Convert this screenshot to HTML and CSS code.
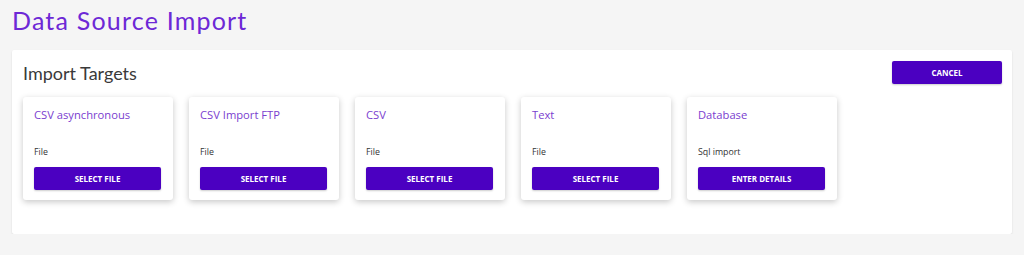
FILE: index.html
```html
<!DOCTYPE html>
<html>
<head>
<meta charset="utf-8">
<link rel="stylesheet" href="styles.css">
</head>
<body>
<h1 class="page-title">Data Source Import</h1>
<section class="panel">
  <div class="panel-head">
    <h2 class="panel-title">Import Targets</h2>
    <button class="btn btn-cancel">CANCEL</button>
  </div>
  <div class="cards">
    <div class="card">
      <div class="card-title">CSV asynchronous</div>
      <div class="card-sub">File</div>
      <button class="btn btn-card">SELECT FILE</button>
    </div>
    <div class="card">
      <div class="card-title">CSV Import FTP</div>
      <div class="card-sub">File</div>
      <button class="btn btn-card">SELECT FILE</button>
    </div>
    <div class="card">
      <div class="card-title">CSV</div>
      <div class="card-sub">File</div>
      <button class="btn btn-card">SELECT FILE</button>
    </div>
    <div class="card">
      <div class="card-title">Text</div>
      <div class="card-sub">File</div>
      <button class="btn btn-card">SELECT FILE</button>
    </div>
    <div class="card">
      <div class="card-title">Database</div>
      <div class="card-sub">Sql import</div>
      <button class="btn btn-card">ENTER DETAILS</button>
    </div>
  </div>
</section>
</body>
</html>
```
FILE: styles.css
```css
html, body { margin: 0; padding: 0; }
body {
  background: #f5f5f5;
  padding: 0 12px;
  font-family: "Open Sans", "Liberation Sans", sans-serif;
  width: 1000px;
}
.page-title {
  margin: 0;
  padding-top: 5px;
  height: 45px;
  box-sizing: border-box;
  font-family: Lato, "Open Sans", sans-serif;
  font-weight: 400;
  font-size: 25px;
  line-height: 30px;
  color: #6d28d6;
  letter-spacing: 1.2px;
}
.panel {
  background: #fff;
  box-shadow: 0 1px 2px rgba(0,0,0,0.12);
  border-radius: 2px;
  padding: 11px 11px 34px 11px;
  margin-top: 5px;
}
.panel-head {
  display: flex;
  justify-content: space-between;
  align-items: flex-start;
  height: 36px;
}
.panel-title {
  margin: 0;
  padding-top: 1px;
  font-family: Lato, "Open Sans", sans-serif;
  font-weight: 400;
  font-size: 18px;
  line-height: 22px;
  color: #3a3a3a;
  letter-spacing: 0;
}
.btn {
  border: none;
  background: #4b00c1;
  color: #fff;
  font-family: "Open Sans", sans-serif;
  font-weight: 700;
  font-size: 8px;
  border-radius: 2px;
  box-shadow: 0 1px 2px rgba(0,0,0,0.2);
  padding: 0;
  cursor: pointer;
}
.btn-cancel {
  width: 110px;
  height: 23px;
  margin-right: -1px;
}
.cards {
  display: flex;
  gap: 16px;
}
.card {
  width: 150px;
  height: 103px;
  box-sizing: border-box;
  padding: 10px 12px 0 11px;
  background: #fff;
  border-radius: 3px;
  box-shadow: 0 2px 6px rgba(0,0,0,0.22);
  display: flex;
  flex-direction: column;
}
.card-title {
  font-size: 11.2px;
  line-height: 15px;
  color: #7a40cf;
}
.card-sub {
  margin-top: 24px;
  font-size: 8.8px;
  line-height: 12px;
  color: #333;
}
.btn-card {
  margin-top: 9px;
  width: 127px;
  height: 23px;
}
```
